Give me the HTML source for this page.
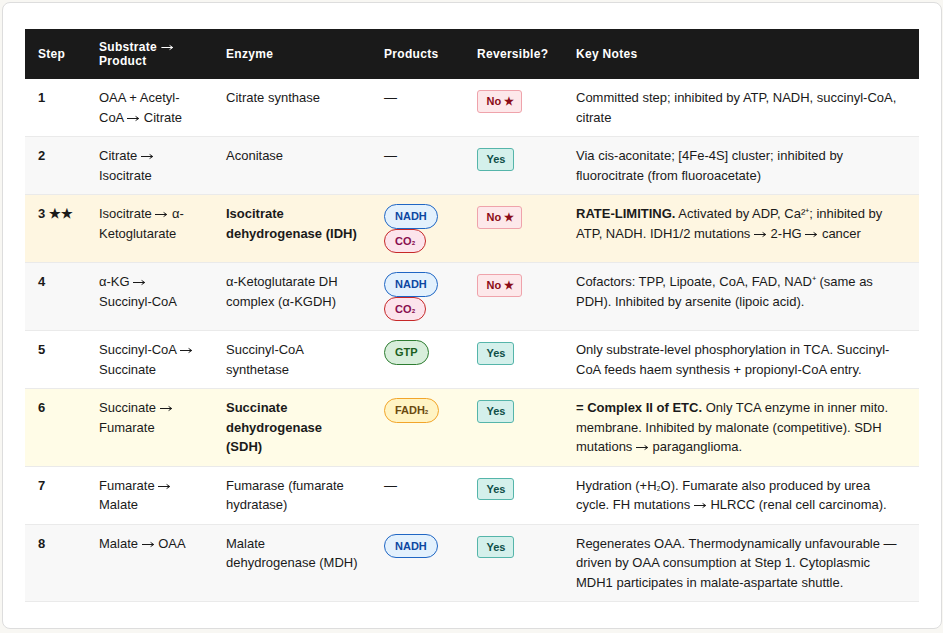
<!DOCTYPE html>
<html><head><meta charset="utf-8">
<style>
html,body{margin:0;padding:0;}
body{background:#f8f7f3;width:943px;height:633px;overflow:hidden;position:relative;font-family:"Liberation Sans",sans-serif;color:#1a1a1a;}
.card{position:absolute;left:2px;top:2px;width:938px;height:625px;background:#fff;border:1px solid #dddddd;border-radius:8px;}
table{position:absolute;left:25px;top:29px;width:894px;border-collapse:collapse;table-layout:fixed;}
th{background:#1a1a1a;color:#fff;font-size:12px;font-weight:bold;letter-spacing:0.3px;text-align:left;vertical-align:middle;height:50px;padding:0 13px;line-height:14.4px;box-sizing:border-box;}
td{font-size:13px;line-height:19.5px;padding:9px 13px;vertical-align:top;border-bottom:1px solid #eaeaea;}
tr.alt td{background:#f8f8f8;}
tr.hl3 td{background:#fef6e1;}
tr.hl6 td{background:#fffce7;}
td.step{font-weight:bold;}
b{font-weight:bold;}
.pill{display:block;width:fit-content;border-radius:13px;font-size:11px;font-weight:bold;letter-spacing:0;padding:0 10px;height:24.5px;line-height:22.5px;border:1px solid;box-sizing:border-box;}
.nadh{background:#e3f1fd;border-color:#1f66c4;color:#0d47a1;}
.co2{background:#fce4ec;border-color:#c62828;color:#880e4f;}
.gtp{background:#d8eedb;border-color:#2e7d32;color:#1b5e20;}
.fadh{background:#fff4c4;border-color:#f2a52a;color:#6b4a0f;padding-right:9.2px;}
.badge{display:inline-block;border-radius:3px;font-size:11px;font-weight:bold;padding:4px 7px 4px 8.5px;line-height:12.6px;height:22.6px;box-sizing:border-box;border:1px solid;margin-top:2px;}
.no{background:#fde8ea;border-color:#efa3ab;color:#8b0b16;}
.yes{background:#d4f0eb;border-color:#55b5aa;color:#0e4f48;padding-right:7.6px;}
.ar{width:1em;height:1em;vertical-align:baseline;overflow:visible;}
th .ar{width:13px;height:13px;}
.sb{display:inline-block;transform:scaleX(0.8);margin:0 -0.5px;}
.st{margin-left:-0.4px;}
</style></head><body>
<div class="card"></div>
<table>
<colgroup><col style="width:61px"><col style="width:127px"><col style="width:158px"><col style="width:93px"><col style="width:99px"><col style="width:356px"></colgroup>
<thead><tr><th>Step</th><th><div style="position:relative;top:-1px">Substrate <svg class="ar" viewBox="0 0 13 13"><path d="M0.4 9.5H11.6M8.6 7.4L11.7 9.5L8.6 11.6" fill="none" stroke="currentColor" stroke-width="1"/></svg><br>Product</div></th><th>Enzyme</th><th>Products</th><th>Reversible?</th><th>Key Notes</th></tr></thead>
<tbody>
<tr><td class="step">1</td><td>OAA + Acetyl-CoA <svg class="ar" viewBox="0 0 13 13"><path d="M0 9.5H11.6M8.6 7.4L11.7 9.5L8.6 11.6" fill="none" stroke="currentColor" stroke-width="1"/></svg> Citrate</td><td>Citrate synthase</td><td>—</td><td><span class="badge no">No <span class="st">★</span></span></td><td>Committed step; inhibited by ATP, NADH, succinyl-CoA, citrate</td></tr>
<tr class="alt"><td class="step">2</td><td>Citrate <svg class="ar" viewBox="0 0 13 13"><path d="M0 9.5H11.6M8.6 7.4L11.7 9.5L8.6 11.6" fill="none" stroke="currentColor" stroke-width="1"/></svg> Isocitrate</td><td>Aconitase</td><td>—</td><td><span class="badge yes">Yes</span></td><td>Via cis-aconitate; [4Fe-4S] cluster; inhibited by fluorocitrate (from fluoroacetate)</td></tr>
<tr class="hl3"><td class="step">3 ★★</td><td>Isocitrate <svg class="ar" viewBox="0 0 13 13"><path d="M0 9.5H11.6M8.6 7.4L11.7 9.5L8.6 11.6" fill="none" stroke="currentColor" stroke-width="1"/></svg> α-Ketoglutarate</td><td><b>Isocitrate dehydrogenase (IDH)</b></td><td><span class="pill nadh">NADH</span><span class="pill co2">CO<span class="sb">₂</span></span></td><td><span class="badge no">No <span class="st">★</span></span></td><td><b>RATE-LIMITING.</b> Activated by ADP, Ca²⁺; inhibited by ATP, NADH. IDH1/2 mutations <svg class="ar" viewBox="0 0 13 13"><path d="M0 9.5H11.6M8.6 7.4L11.7 9.5L8.6 11.6" fill="none" stroke="currentColor" stroke-width="1"/></svg> 2-HG <svg class="ar" viewBox="0 0 13 13"><path d="M0 9.5H11.6M8.6 7.4L11.7 9.5L8.6 11.6" fill="none" stroke="currentColor" stroke-width="1"/></svg> cancer</td></tr>
<tr class="alt"><td class="step">4</td><td>α-KG <svg class="ar" viewBox="0 0 13 13"><path d="M0 9.5H11.6M8.6 7.4L11.7 9.5L8.6 11.6" fill="none" stroke="currentColor" stroke-width="1"/></svg> Succinyl-CoA</td><td>α-Ketoglutarate DH complex (α-KGDH)</td><td><span class="pill nadh">NADH</span><span class="pill co2">CO<span class="sb">₂</span></span></td><td><span class="badge no">No <span class="st">★</span></span></td><td>Cofactors: TPP, Lipoate, CoA, FAD, NAD⁺ (same as PDH). Inhibited by arsenite (lipoic acid).</td></tr>
<tr><td class="step">5</td><td>Succinyl-CoA <svg class="ar" viewBox="0 0 13 13"><path d="M0 9.5H11.6M8.6 7.4L11.7 9.5L8.6 11.6" fill="none" stroke="currentColor" stroke-width="1"/></svg> Succinate</td><td>Succinyl-CoA synthetase</td><td><span class="pill gtp">GTP</span></td><td><span class="badge yes">Yes</span></td><td>Only substrate-level phosphorylation in TCA. Succinyl-CoA feeds haem synthesis + propionyl-CoA entry.</td></tr>
<tr class="hl6"><td class="step">6</td><td>Succinate <svg class="ar" viewBox="0 0 13 13"><path d="M0 9.5H11.6M8.6 7.4L11.7 9.5L8.6 11.6" fill="none" stroke="currentColor" stroke-width="1"/></svg> Fumarate</td><td><b>Succinate dehydrogenase (SDH)</b></td><td><span class="pill fadh">FADH<span class="sb">₂</span></span></td><td><span class="badge yes">Yes</span></td><td><b>= Complex II of ETC.</b> Only TCA enzyme in inner mito. membrane. Inhibited by malonate (competitive). SDH mutations <svg class="ar" viewBox="0 0 13 13"><path d="M0 9.5H11.6M8.6 7.4L11.7 9.5L8.6 11.6" fill="none" stroke="currentColor" stroke-width="1"/></svg> paraganglioma.</td></tr>
<tr><td class="step">7</td><td>Fumarate <svg class="ar" viewBox="0 0 13 13"><path d="M0 9.5H11.6M8.6 7.4L11.7 9.5L8.6 11.6" fill="none" stroke="currentColor" stroke-width="1"/></svg> Malate</td><td>Fumarase (fumarate hydratase)</td><td>—</td><td><span class="badge yes">Yes</span></td><td>Hydration (+H<span class="sb">₂</span>O). Fumarate also produced by urea cycle. FH mutations <svg class="ar" viewBox="0 0 13 13"><path d="M0 9.5H11.6M8.6 7.4L11.7 9.5L8.6 11.6" fill="none" stroke="currentColor" stroke-width="1"/></svg> HLRCC (renal cell carcinoma).</td></tr>
<tr class="alt"><td class="step">8</td><td>Malate <svg class="ar" viewBox="0 0 13 13"><path d="M0 9.5H11.6M8.6 7.4L11.7 9.5L8.6 11.6" fill="none" stroke="currentColor" stroke-width="1"/></svg> OAA</td><td>Malate dehydrogenase (MDH)</td><td><span class="pill nadh">NADH</span></td><td><span class="badge yes">Yes</span></td><td>Regenerates OAA. Thermodynamically unfavourable — driven by OAA consumption at Step 1. Cytoplasmic MDH1 participates in malate-aspartate shuttle.</td></tr>
</tbody></table>
</body></html>
